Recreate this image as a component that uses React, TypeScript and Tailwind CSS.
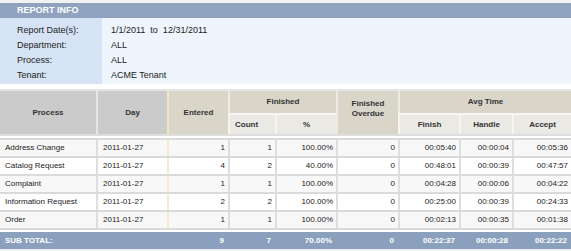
import React from "react";

const cols = "grid grid-cols-[96px_71px_61px_47px_61px_62px_61px_53px_59px]";

const rows = [
  ["Address Change", "2011-01-27", "1", "1", "100.00%", "0", "00:05:40", "00:00:04", "00:05:36"],
  ["Catalog Request", "2011-01-27", "4", "2", "40.00%", "0", "00:48:01", "00:00:39", "00:47:57"],
  ["Complaint", "2011-01-27", "1", "1", "100.00%", "0", "00:04:28", "00:00:06", "00:04:22"],
  ["Information Request", "2011-01-27", "2", "2", "100.00%", "0", "00:25:00", "00:00:39", "00:24:33"],
  ["Order", "2011-01-27", "1", "1", "100.00%", "0", "00:02:13", "00:00:35", "00:01:38"],
];

const info = [
  ["Report Date(s):", "1/1/2011  to  12/31/2011"],
  ["Department:", "ALL"],
  ["Process:", "ALL"],
  ["Tenant:", "ACME Tenant"],
];

export default function App() {
  return (
    <div className="w-[571px] h-[251px] bg-white overflow-hidden font-['Liberation_Sans',Arial,sans-serif] text-[#222]">
      {/* Report info */}
      <div className="pt-[3px] bg-[#f2f2f2]">
        <div className="h-[15px] bg-[#8fa3bf] pl-[17px] text-[9px] leading-[15px] font-bold text-white">REPORT INFO</div>
        <div className="flex h-[66px] text-[9px]">
          <div className="w-[102px] bg-[#d5e3f4] pt-[5px] pl-[17px]">
            {info.map(([l]) => (
              <div key={l} className="h-[15px] leading-[15px]">{l}</div>
            ))}
          </div>
          <div className="flex-1 bg-[#eef5fd] pt-[5px] pl-[9px]">
            {info.map(([l, v]) => (
              <div key={l} className="h-[15px] leading-[15px] whitespace-pre">{v}</div>
            ))}
          </div>
        </div>
      </div>

      {/* Table */}
      <div className="mt-[5px] border-t-2 border-[#e4e4e4]">
        <div className={`${cols} grid-rows-[22px_21px] text-[8px] font-bold text-[#333] border-b-2 border-[#dedede]`}>
          <div className="row-span-2 bg-[#cbcbcb] flex items-center justify-center">Process</div>
          <div className="row-span-2 bg-[#cbcbcb] border-l-2 border-[#e6e6e6] flex items-center justify-center">Day</div>
          <div className="row-span-2 bg-[#d9d6c9] border-l-2 border-[#f3e5bc] flex items-center justify-center">Entered</div>
          <div className="col-span-2 bg-[#d9d6c9] border-l-2 border-[#ebebe6] flex items-center justify-center">Finished</div>
          <div className="row-span-2 bg-[#d9d6c9] border-l-2 border-[#ebebe6] flex items-center justify-center text-center leading-[10px] pb-[8px]">Finished<br />Overdue</div>
          <div className="col-span-3 bg-[#d9d6c9] border-l-2 border-[#ebebe6] flex items-center justify-center">Avg Time</div>
          <div className="bg-[#ebe9e3] border-l-2 border-t-2 border-[#f6f5f2] flex items-center pl-[5px]">Count</div>
          <div className="bg-[#ebe9e3] border-l-2 border-t-2 border-[#f6f5f2] flex items-center justify-center">%</div>
          <div className="bg-[#ebe9e3] border-l-2 border-t-2 border-[#f6f5f2] flex items-center justify-center">Finish</div>
          <div className="bg-[#ebe9e3] border-l-2 border-t-2 border-[#f6f5f2] flex items-center justify-center">Handle</div>
          <div className="bg-[#ebe9e3] border-l-2 border-t-2 border-[#f6f5f2] flex items-center justify-center">Accept</div>
        </div>

        <div className="mt-[2px] border-t-2 border-[#dadada] text-[8px]">
          {rows.map((r, i) => (
            <div key={r[0]} className={`${cols} h-[18px] border-b-2 border-[#dadada] ${i % 2 === 0 ? "bg-[#f8f8f8]" : "bg-white"}`}>
              {r.map((c, j) => (
                <div
                  key={j}
                  className={`flex items-center ${j < 2 ? "pl-[5px]" : "justify-end pr-[3px]"} ${
                    j === 0 ? "" : j === 2 ? "border-l-2 border-[#f5ebcc]" : "border-l-2 border-[#dedede]"
                  }`}
                >
                  {c}
                </div>
              ))}
            </div>
          ))}
        </div>

        <div className="mt-[2px] bg-[#f0f0f0] pb-[3px]">
          <div className={`${cols} h-[17px] bg-[#8aa0bd] text-[8px] font-bold text-white`}>
            <div className="col-span-2 flex items-center pl-[5px]">SUB TOTAL:</div>
            {["9", "7", "70.00%", "0", "00:22:37", "00:00:28", "00:22:22"].map((v, j) => (
              <div key={j} className="flex items-center justify-end pr-[4px]">{v}</div>
            ))}
          </div>
        </div>
      </div>
    </div>
  );
}
